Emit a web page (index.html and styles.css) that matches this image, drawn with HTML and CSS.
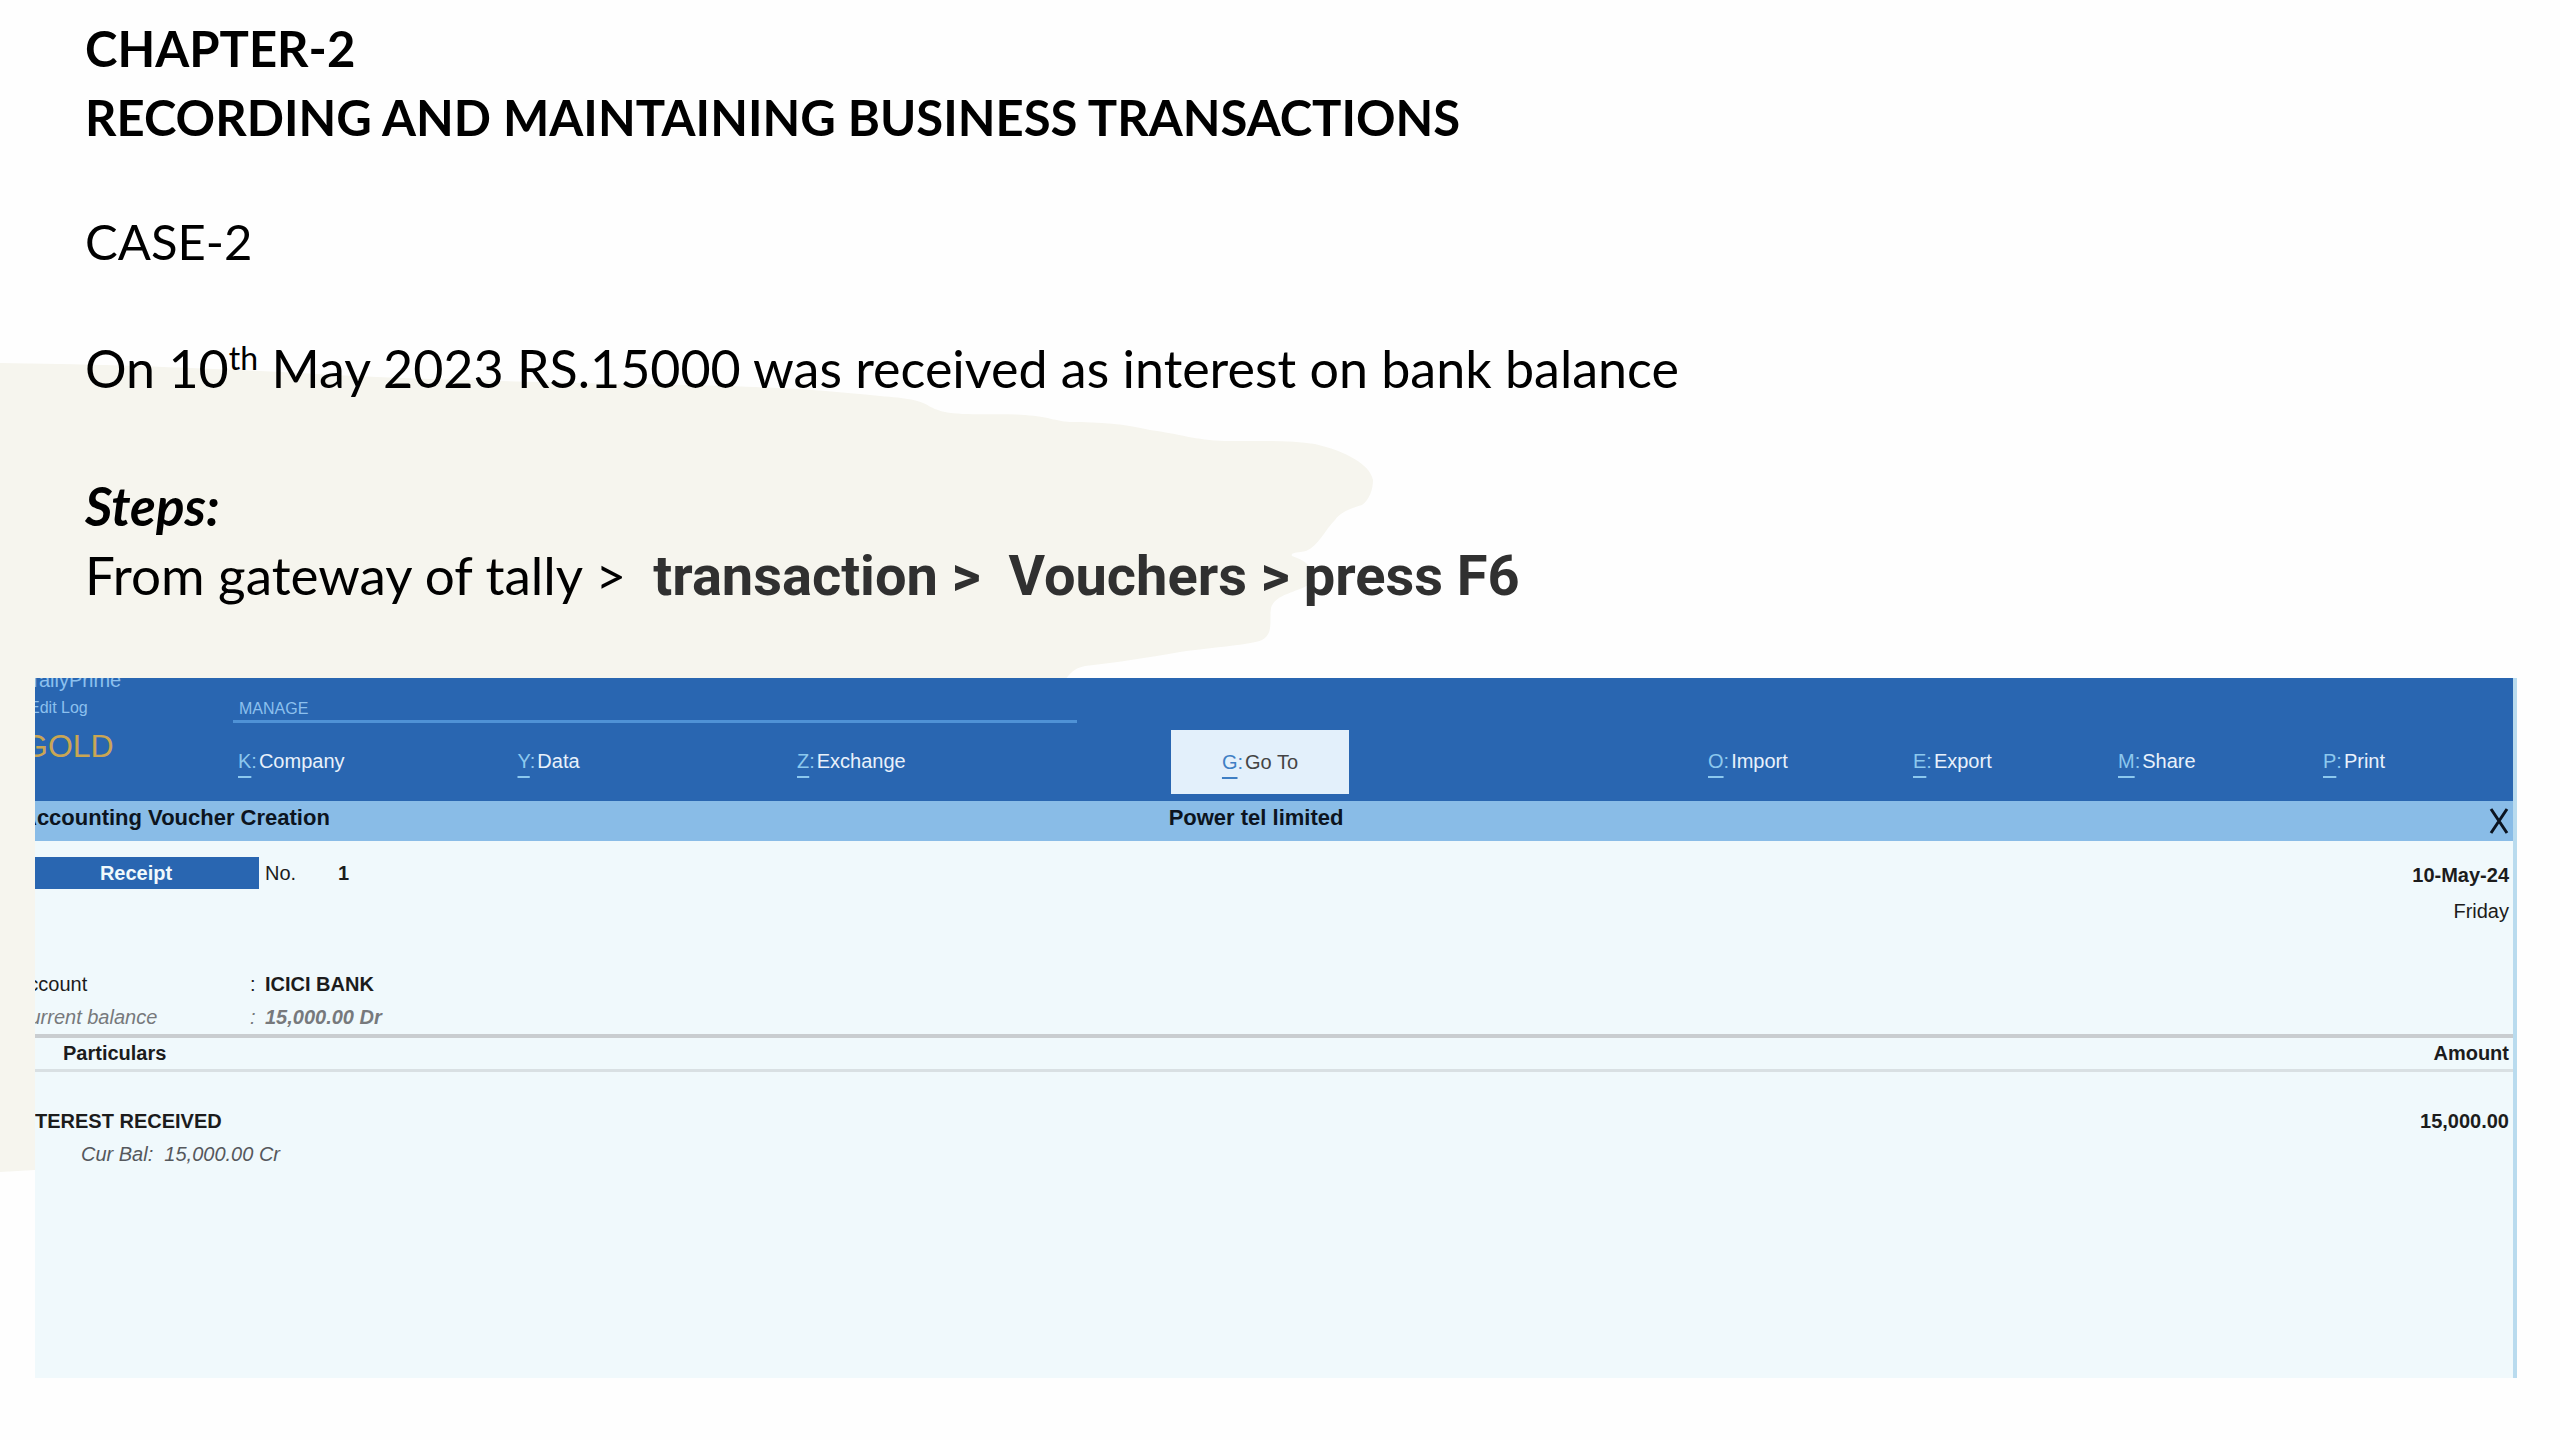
FILE: index.html
```html
<!DOCTYPE html>
<html lang="en">
<head>
  <meta charset="UTF-8" />
  <meta name="viewport" content="width=device-width, initial-scale=1.0"/>
  <title>Chapter 2 - Recording and Maintaining Business Transactions</title>
  <link rel="stylesheet" href="styles.css">
</head>
<body>
  <!-- beige brush stroke behind the text -->
  <svg class="brush" viewBox="0 0 1400 1200" width="1400" height="1200" aria-hidden="true">
    <path d="M0 363 C90 364 180 367 300 373 C450 382 650 384 726 386 C790 388 830 391 880 396 C935 400 920 406 945 412 C965 416 1000 413 1025 415 C1050 417 1055 421 1070 422 C1100 422 1125 424 1150 430 C1180 434 1195 440 1225 441 C1260 441 1290 440 1315 444 C1345 451 1370 464 1373 480 C1373 490 1369 500 1362 505 C1352 508 1340 512 1335 520 C1325 530 1318 546 1306 551 C1298 553 1290 552 1292 556 C1310 562 1318 572 1308 585 C1298 592 1275 594 1271 608 C1269 620 1274 634 1262 640 C1250 645 1215 647 1180 652 C1145 658 1120 662 1085 666 C1072 669 1070 674 1065 680 L300 1100 L35 1170 L0 1172 Z"/>
  </svg>

  <main class="slide">
    <header class="slide-text">
      <h1>CHAPTER-2<br>RECORDING AND MAINTAINING BUSINESS TRANSACTIONS</h1>
      <p class="case">CASE-2</p>
      <p class="question">On 10<sup>th</sup> May 2023 RS.15000 was received as interest on bank balance</p>
      <h2>Steps:</h2>
      <p class="path">From gateway of tally &gt;&nbsp; <strong>transaction &gt;&nbsp; Vouchers &gt; press F6</strong></p>
    </header>

    <!-- Tally window -->
    <section class="tally">
      <div class="topbar">
        <div class="brand">
          <span class="product">TallyPrime</span>
          <span class="edition">Edit Log</span>
          <span class="gold">GOLD</span>
        </div>
        <nav class="manage">
          <span class="manage-title">MANAGE</span>
          <div class="manage-menu">
            <button class="menu-btn"><u>K</u><i>:</i>Company</button>
            <button class="menu-btn"><u>Y</u><i>:</i>Data</button>
            <button class="menu-btn"><u>Z</u><i>:</i>Exchange</button>
          </div>
        </nav>
        <button class="menu-btn goto"><u>G</u><i>:</i>Go To</button>
        <nav class="actions">
          <button class="menu-btn"><u>O</u><i>:</i>Import</button>
          <button class="menu-btn"><u>E</u><i>:</i>Export</button>
          <button class="menu-btn"><u>M</u><i>:</i>Share</button>
          <button class="menu-btn"><u>P</u><i>:</i>Print</button>
        </nav>
      </div>

      <div class="titlebar">
        <span class="screen-name">Accounting Voucher Creation</span>
        <span class="company">Power tel limited</span>
        <button class="close" aria-label="Close">
          <svg viewBox="0 0 20 26" width="20" height="26"><path d="M2 1 L18 25 M18 1 L2 25"/></svg>
        </button>
      </div>

      <div class="voucher">
        <div class="voucher-head">
          <span class="type">Receipt</span>
          <span class="no">No.</span>
          <b class="number">1</b>
          <div class="date"><b>10-May-24</b><span>Friday</span></div>
        </div>

        <dl class="account">
          <dt>Account</dt><dd>ICICI BANK</dd>
          <dt class="bal">Current balance</dt><dd class="bal">15,000.00 Dr</dd>
        </dl>

        <table class="entries">
          <thead>
            <tr><th>Particulars</th><th class="amount">Amount</th></tr>
          </thead>
          <tbody>
            <tr>
              <td><b class="ledger">INTEREST RECEIVED</b><em class="cur-bal">Cur Bal:&nbsp; 15,000.00 Cr</em></td>
              <td class="amount"><b>15,000.00</b></td>
            </tr>
          </tbody>
        </table>
      </div>
    </section>
  </main>
</body>
</html>
```
FILE: styles.css
```css
* {
  box-sizing: border-box;
}
html, body {
  margin: 0; padding: 0;
  min-height: 100%;
}
body {
  position: relative;
  font-family: Lato, "Open Sans", sans-serif;
  background: #fefefe;
  color: #000;
}
.brush {
  position: absolute;
  top: 0; left: 0;
  z-index: -1;
  fill: #f6f5ee;
}

/* slide text */
.slide {
  padding: 14px 43px 62px 35px;
}
.slide-text {
  padding: 0 50px 69px;
}
.slide-text h1,
.slide-text h2,
.slide-text p {
  margin: 0;
  font-size: 52px;
  line-height: 69px;
}
.slide-text h1 {
  font-size: 49px;
}
.slide-text .case {
  margin-top: 55px;
  font-size: 49px;
}
.slide-text .question {
  margin-top: 58px;
}
.slide-text h2 {
  margin-top: 68px;
  font-style: italic;
}
.slide-text h2,
.slide-text .path {
  font-size: 53px;
}
sup {
  font-size: 32px;
  line-height: 0;
}
.path strong {
  font-family: Roboto, sans-serif;
  font-size: 56px;
  line-height: 60px;
  color: #303030;
}

/* Tally window */
.tally {
  overflow: hidden;
  min-height: 700px;
  border-right: 4px solid #b9dbee;
  background: #f0f9fc;
  font-family: "Liberation Sans", Arial, sans-serif;
  font-size: 20px;
  line-height: 33px;
  color: #1c1c1c;
}
.topbar {
  display: grid;
  grid-template-columns: 198fr 938fr 178fr 359fr 809fr;
  height: 123px;
  margin-right: -4px;
  background: #2966b1;
}
.brand {
  display: flex;
  flex-direction: column;
  margin: -12px 0 0 -12px;
  color: #8cc0ee;
}
.product {
  padding-left: 6px;
  line-height: 28px;
}
.edition {
  padding-left: 6px;
  font-size: 16px;
  line-height: 28px;
}
.gold {
  font-size: 32px;
  line-height: 48px;
  color: #c9a654;
}
.manage-title {
  display: block;
  width: 90%;
  padding: 20px 0 0 6px;
  border-bottom: 3px solid #4f92d6;
  font-size: 16px;
  line-height: 22px;
  color: #8cc0ee;
}
.manage-menu {
  display: grid;
  grid-template-columns: 281fr 281fr 281fr 95fr;
  padding: 22px 0 0 5px;
}
.menu-btn {
  padding: 0;
  border: none;
  background: none;
  font: inherit;
  text-align: left;
  color: #e8f1fb;
}
.menu-btn u {
  text-decoration-thickness: 2px;
  text-underline-offset: 8px;
}
.menu-btn i {
  margin-right: 2px;
  font-style: normal;
}
.menu-btn u,
.menu-btn i {
  color: #8cc8ee;
}
.goto {
  height: 64px;
  margin-top: 52px;
  background: #e3f0fb;
  text-align: center;
  color: #444;
}
.goto u,
.goto i {
  color: #3f7fc4;
}
.actions {
  grid-column: 5;
  display: grid;
  grid-template-columns: 205fr 205fr 205fr 194fr;
  align-content: start;
  padding-top: 67px;
}
.titlebar {
  display: grid;
  grid-template-columns: 1136fr 178fr 1168fr;
  height: 40px;
  padding-right: 4px;
  background: #89bce7;
  font-size: 22px;
  font-weight: bold;
  color: #0c1420;
}
.screen-name {
  margin-left: -14px;
}
.company {
  text-align: center;
  white-space: nowrap;
}
.close {
  justify-self: end;
  align-self: center;
  display: flex;
  padding: 0;
  border: none;
  background: none;
}
.close svg {
  fill: none;
  stroke: #0c1420;
  stroke-width: 3;
}

/* voucher body */
.voucher-head {
  display: flex;
  align-items: flex-start;
  padding: 16px 4px 0 0;
}
.type {
  width: 224px;
  padding-right: 22px;
  background: #2966b1;
  line-height: 32px;
  text-align: center;
  font-weight: bold;
  color: #f0f9fc;
}
.no {
  width: 79px;
  padding-left: 6px;
}
.date {
  margin-left: auto;
  line-height: 36px;
  text-align: right;
}
.date span {
  display: block;
}
.account {
  display: grid;
  grid-template-columns: 235px 1fr;
  margin: 39px 0 0 -20px;
}
.account dd {
  margin: 0;
  font-weight: bold;
}
.account dd::before {
  content: ":";
  display: inline-block;
  width: 15px;
  font-weight: normal;
}
.account .bal {
  font-style: italic;
  color: #77797c;
}
.entries {
  width: 100%;
  border-collapse: collapse;
}
.entries th {
  padding: 0 4px 0 28px;
  border-top: 4px solid #c9cdd0;
  border-bottom: 3px solid #d9e0e3;
  line-height: 31px;
  text-align: left;
}
.entries td {
  padding: 33px 4px 0 0;
  vertical-align: top;
}
.entries .amount {
  text-align: right;
}
.ledger {
  display: block;
  margin-left: -20px;
}
.cur-bal {
  display: block;
  padding-left: 46px;
  color: #55585c;
}
```
